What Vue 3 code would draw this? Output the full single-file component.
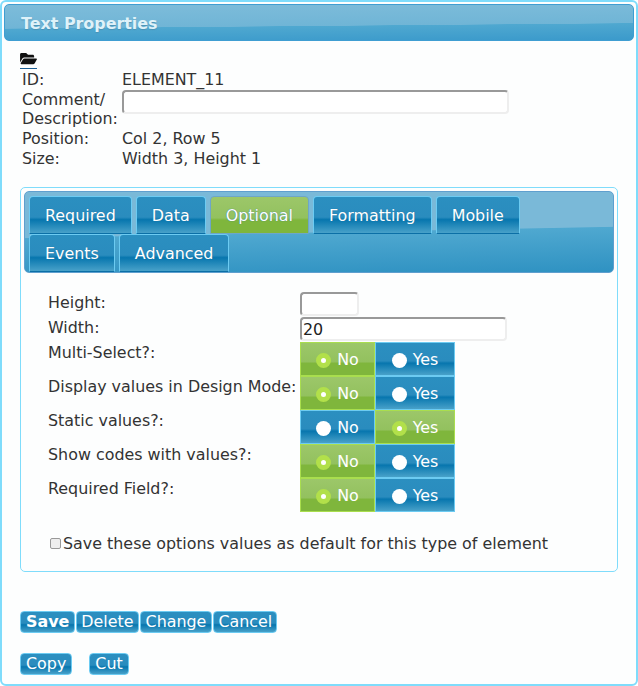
<template>
  <div class="dialog">
    <div class="title-bar">Text Properties</div>
    <div class="body">
      <a class="open-link">
        <svg viewBox="0 0 576 512" width="17" height="15"><path fill="#111" d="M572.7 292.1L500.3 416.2A64 64 0 0 1 445 448H45c-18.500 0-30-20-20.700-36.100l72.400-124.200A64 64 0 0 1 152 256h400c18.500 0 30 20 20.700 36.100zM152 224h328v-48c0-26.500-21.500-48-48-48H272l-64-64H48C21.500 64 0 85.500 0 112v278l69.100-118.400C86.200 242.300 118 224 152 224z"/></svg>
      </a>
      <div class="info">
        <div class="info-label">ID:</div>
        <div>ELEMENT_11</div>
        <div class="info-label">Comment/<br>Description:</div>
        <div><input class="text-input comment" type="text"></div>
        <div class="info-label">Position:</div>
        <div>Col 2, Row 5</div>
        <div class="info-label">Size:</div>
        <div>Width 3, Height 1</div>
      </div>

      <div class="panel">
        <div class="tabs">
          <div
            v-for="tab in tabs"
            :key="tab"
            class="tab"
            :class="{ active: tab === 'Optional' }"
          >{{ tab }}</div>
        </div>
        <div class="fields">
          <div class="field short">
            <label>Height:</label>
            <input class="text-input height" type="text">
          </div>
          <div class="field short">
            <label>Width:</label>
            <input class="text-input width" type="text" value="20">
          </div>
          <div v-for="row in toggles" :key="row.label" class="field">
            <label>{{ row.label }}</label>
            <div class="toggle">
              <div class="opt no" :class="{ on: !row.yes }"><span class="dot"></span>No</div>
              <div class="opt yes" :class="{ on: row.yes }"><span class="dot"></span>Yes</div>
            </div>
          </div>
        </div>
        <div class="save-default">
          <input type="checkbox">
          <span>Save these options values as default for this type of element</span>
        </div>
      </div>

      <div class="actions">
        <button class="btn bold">Save</button>
        <button class="btn">Delete</button>
        <button class="btn wide">Change</button>
        <button class="btn">Cancel</button>
      </div>
      <div class="actions second">
        <button class="btn">Copy</button>
        <button class="btn">Cut</button>
      </div>
    </div>
  </div>
</template>

<script setup>
const tabs = ['Required', 'Data', 'Optional', 'Formatting', 'Mobile', 'Events', 'Advanced']
const toggles = [
  { label: 'Multi-Select?:', yes: false },
  { label: 'Display values in Design Mode:', yes: false },
  { label: 'Static values?:', yes: true },
  { label: 'Show codes with values?:', yes: false },
  { label: 'Required Field?:', yes: false },
]
</script>

<style>
html, body { margin: 0; background: #fff; }
</style>

<style scoped>
.dialog {
  box-sizing: border-box;
  width: 638px;
  height: 686px;
  padding: 2px;
  border: 2px solid #7fdcfb;
  border-radius: 6px;
  background: #fdfefe;
  font: 15.900px/19.600px "DejaVu Sans", Verdana, sans-serif;
  color: #333;
  overflow: hidden;
}
.title-bar {
  box-sizing: border-box;
  height: 37px;
  padding: 9px 16px 0;
  border: 1px solid #3f9ed2;
  border-radius: 5px;
  background: linear-gradient(179.500deg, #7dbcda 0, #70b5d6 58%, #4fa8d0 59%, #3b9acb 100%);
  color: #dff2f9;
  font-weight: bold;
  text-shadow: 0 1px 1px #4b92b5;
}
.body { padding: 10px 0 0 16px; }
.open-link {
  display: block;
  width: 17px;
  height: 17px;
  margin-bottom: 1px;
  border-bottom: 1px solid #1c5f95;
}
.open-link svg { display: block; }
.info {
  display: grid;
  grid-template-columns: 100px 1fr;
  padding-left: 2px;
  line-height: 19.700px;
}
.text-input {
  box-sizing: border-box;
  height: 24px;
  padding: 0 1px;
  border: 2px solid;
  border-color: #999 #eee #eee #999;
  border-radius: 4px;
  background: #fff;
  font: inherit;
  color: #222;
  outline: none;
  display: block;
}
.comment { width: 387px; }
.panel {
  box-sizing: border-box;
  width: 598px;
  height: 385px;
  margin-top: 18.500px;
  padding: 3px;
  border: 1px solid #7fdcfb;
  border-radius: 5px;
}
.tabs {
  box-sizing: border-box;
  display: flex;
  flex-wrap: wrap;
  gap: 0 4px;
  height: 82px;
  padding: 4px 60px 0 4px;
  border: 1px solid #5f9fce;
  border-radius: 5px;
  background: linear-gradient(178.900deg, #7ab9d8 0, #7ab9d8 50%, #4fa8d0 51%, #2f92c2 100%);
}
.tab {
  box-sizing: border-box;
  height: 38px;
  padding: 9px 15px 0;
  border: 1px solid #6ccbf2;
  border-bottom-color: #0b6fa6;
  border-radius: 4px 4px 0 0;
  background: linear-gradient(#2b8fc0 0, #2a8cbe 56%, #0776ae 63%, #48a1c9 100%);
  color: #fff;
  text-shadow: 0 0 1px #1a6f9b;
}
.tab.active {
  border-color: #6ea6c8;
  background: linear-gradient(#9cc769 0, #93c15f 58%, #7fb63c 64%, #7fb63c 100%);
}
.fields { padding: 19px 0 0 24px; }
.field {
  display: flex;
  align-items: flex-start;
  height: 34px;
}
.field.short { height: 25px; }
.field label {
  width: 252px;
  flex: none;
  white-space: nowrap;
  padding-top: 1px;
}
.height { width: 59px; }
.width { width: 207px; }
.toggle { display: flex; }
.opt {
  box-sizing: border-box;
  height: 34px;
  padding-top: 2px;
  display: flex;
  align-items: center;
  justify-content: center;
  gap: 6px;
  border: 1px solid #6ccbf2;
  background: linear-gradient(#2b8fc0 0, #2a8cbe 56%, #0776ae 63%, #48a1c9 100%);
  color: #fff;
}
.opt.no { width: 75px; }
.opt.yes { width: 80px; }
.opt.on {
  border-color: #a9de4e;
  background: linear-gradient(#9cc769 0, #93c15f 58%, #7fb63c 64%, #7fb63c 100%);
}
.dot {
  box-sizing: border-box;
  width: 15px;
  height: 15px;
  border-radius: 50%;
  background: #fff;
}
.on .dot {
  border: 5px solid #b2e04a;
  background: #fff;
}
.save-default {
  display: flex;
  align-items: center;
  gap: 2px;
  padding: 22px 0 0 26px;
}
.save-default input {
  appearance: none;
  box-sizing: border-box;
  width: 11px;
  height: 11px;
  margin: 0;
  border: 1px solid #999;
  border-radius: 2px;
  background: #eee;
}
.actions {
  display: flex;
  gap: 1px;
  margin-top: 39px;
}
.actions.second { gap: 17px; margin-top: 20px; }
.btn {
  box-sizing: border-box;
  height: 22px;
  padding: 0 4px;
  border: 1px solid #6ccbf2;
  border-radius: 4px;
  background: linear-gradient(#2b8fc0 0, #2a8cbe 56%, #0776ae 64%, #48a1c9 100%);
  color: #fff;
  font: 15.900px/18px "DejaVu Sans", Verdana, sans-serif;
}
.btn.bold { font-weight: bold; padding: 0 5px; }
.btn.wide { padding: 0 5px; }
.second .btn { padding: 0 5px; }
</style>
